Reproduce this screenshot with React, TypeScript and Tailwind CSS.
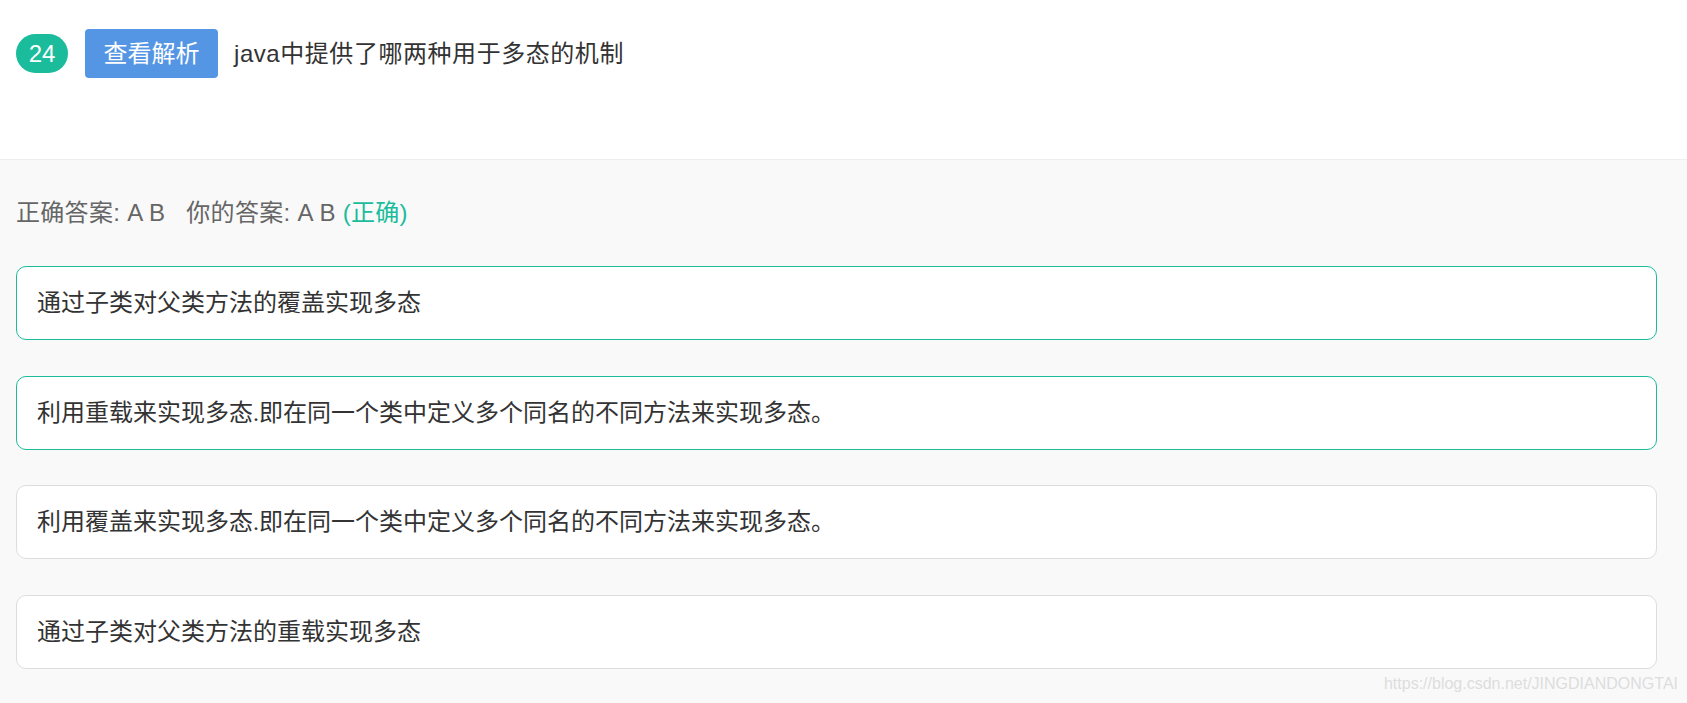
import React from "react";

const options = [
  { text: "通过子类对父类方法的覆盖实现多态", selected: true },
  { text: "利用重载来实现多态.即在同一个类中定义多个同名的不同方法来实现多态。", selected: true },
  { text: "利用覆盖来实现多态.即在同一个类中定义多个同名的不同方法来实现多态。", selected: false },
  { text: "通过子类对父类方法的重载实现多态", selected: false },
];

export default function App() {
  return (
    <div className="relative min-h-screen bg-[#f9f9f9] font-['Liberation_Sans','Noto_Sans_CJK_SC',sans-serif]">
      <div className="h-[160px] bg-white border-b border-[#eeeeee] pl-4 pt-[29px]">
        <div className="flex items-center">
          <div className="flex h-[39px] w-[52px] items-center justify-center rounded-full bg-[#1abc9c] text-[24px] leading-none text-white">
            24
          </div>
          <button className="ml-[17px] flex h-[49px] w-[133px] items-center justify-center rounded-[4px] bg-[#5596e4] text-[24px] leading-none text-white">
            查看解析
          </button>
          <div className="ml-4 text-[24px] leading-none tracking-[0.55px] text-[#333333]">java中提供了哪两种用于多态的机制</div>
        </div>
      </div>
      <div className="pl-4 pr-[30px]">
        <div className="pt-[35px] text-[24px] leading-[36px] tracking-[0.3px] text-[#666666]">
          正确答案: A B&nbsp;&nbsp; 你的答案: A B <span className="text-[#1abc9c]">(正确)</span>
        </div>
        <div className="mt-[35px] flex flex-col gap-[35.5px]">
          {options.map((o, i) => (
            <div
              key={i}
              className={
                o.selected
                  ? "flex h-[74px] items-center rounded-[10px] border border-[#1abc9c] bg-white pl-5 text-[24px] text-[#333333] font-['Liberation_Serif','Noto_Sans_CJK_SC',serif]"
                  : "flex h-[74px] items-center rounded-[10px] border border-[#dddddd] bg-white pl-5 text-[24px] text-[#333333] font-['Liberation_Serif','Noto_Sans_CJK_SC',serif]"
              }
            >
              {o.text}
            </div>
          ))}
        </div>
      </div>
      <div className="absolute right-[9px] top-[676px] text-[16px] leading-none text-[#dddddd]">
        https://blog.csdn.net/JINGDIANDONGTAI
      </div>
    </div>
  );
}
